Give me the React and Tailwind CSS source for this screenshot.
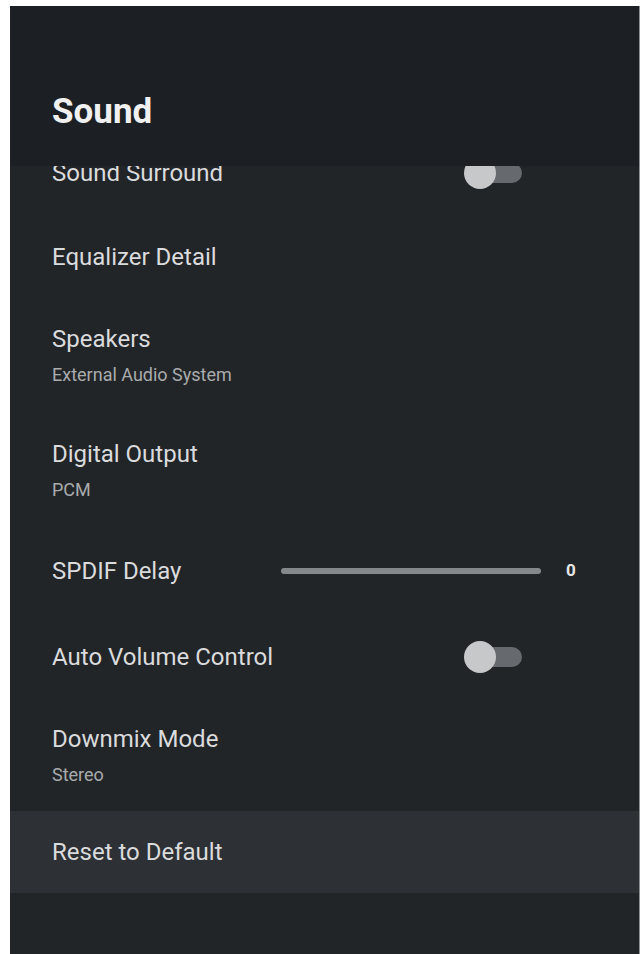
import React from "react";

function Toggle() {
  return (
    <div className="relative w-[58px] h-[32px] shrink-0">
      <div className="absolute right-0 top-[6px] w-[46px] h-[20px] rounded-full bg-[#66696d]" />
      <div className="absolute left-0 top-0 w-[32px] h-[32px] rounded-full bg-[#c7c8ca]" />
    </div>
  );
}

function Row({ title, sub, h, children, highlight }) {
  return (
    <div
      className={`flex items-center pl-[42px] shrink-0 ${highlight ? "bg-[#2d3034]" : ""}`}
      style={{ height: h }}
    >
      <div className="flex flex-col flex-1">
        <div className="text-[24px] leading-[28px] text-[#dadbdd]">{title}</div>
        {sub && <div className="mt-[11px] text-[18px] leading-[22px] text-[#a9abad]">{sub}</div>}
      </div>
      {children}
    </div>
  );
}

export default function App() {
  return (
    <div className="w-[642px] h-[954px] bg-white pt-[6px] pl-[10px] pr-[2px] overflow-hidden" style={{ fontFamily: "Roboto, 'Liberation Sans', sans-serif" }}>
      <div className="w-full h-full bg-[#222528] flex flex-col border-r border-[#8d8f92]">
        <div className="h-[160px] shrink-0 bg-[#1c1f23] flex items-end pl-[42px] pb-[34px] relative z-10">
          <div className="text-[35px] leading-[40px] font-bold text-[#f0f0f0]">Sound</div>
        </div>
        <div className="flex flex-col overflow-hidden flex-1">
          <div className="mt-[-36px]">
            <Row title="Sound Surround" h={85}>
              <div className="mr-[117px]"><Toggle /></div>
            </Row>
          </div>
          <Row title="Equalizer Detail" h={84} />
          <Row title="Speakers" sub="External Audio System" h={113} />
          <Row title="Digital Output" sub="PCM" h={116} />
          <Row title="SPDIF Delay" h={86}>
            <div className="flex items-center mr-[62px]">
              <div className="w-[260px] h-[6px] rounded-full bg-[#85888b]" />
              <div className="ml-[25px] text-[17px] font-bold text-[#e6e6e6] w-[11px]">0</div>
            </div>
          </Row>
          <Row title="Auto Volume Control" h={86}>
            <div className="mr-[117px]"><Toggle /></div>
          </Row>
          <Row title="Downmix Mode" sub="Stereo" h={111} />
          <Row title="Reset to Default" h={82} highlight />
        </div>
      </div>
    </div>
  );
}
